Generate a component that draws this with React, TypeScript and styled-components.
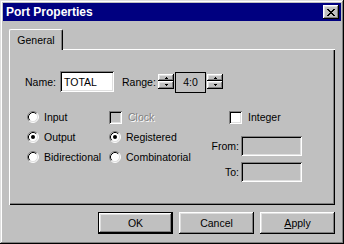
import React from "react";
import styled, { createGlobalStyle } from "styled-components";

const GlobalStyle = createGlobalStyle`
  html, body {
    margin: 0;
    padding: 0;
    background: #c0c0c0;
  }
  body {
    font-family: "Liberation Sans", Arial, sans-serif;
    font-size: 10.5px;
    color: #000;
  }
  * {
    box-sizing: border-box;
  }
`;

const raised = `box-shadow: inset -1px -1px #000, inset 1px 1px #fff, inset -2px -2px #808080, inset 2px 2px #dfdfdf;`;
const sunken = `box-shadow: inset 1px 1px #808080, inset -1px -1px #fff, inset 2px 2px #000, inset -2px -2px #dfdfdf;`;

const Window = styled.div`
  width: 344px;
  height: 244px;
  padding: 3px;
  background: #c0c0c0;
  box-shadow: inset -1px -1px #000, inset 1px 1px #dfdfdf,
    inset -2px -2px #808080, inset 2px 2px #fff;
  display: flex;
  flex-direction: column;
`;

const TitleBar = styled.div`
  height: 18px;
  flex-shrink: 0;
  background: #000080;
  display: flex;
  align-items: center;
  justify-content: space-between;
  padding: 0 2px 0 3px;
`;

const Title = styled.span`
  color: #fff;
  font-weight: bold;
  font-size: 12px;
`;

const CloseButton = styled.div`
  width: 16px;
  height: 14px;
  background: #c0c0c0;
  ${raised}
  display: flex;
  align-items: center;
  justify-content: center;
`;

const Body = styled.div`
  flex: 1;
  display: flex;
  flex-direction: column;
  padding: 8px 6px 0 6px;
`;

const TabStrip = styled.div`
  height: 20px;
  display: flex;
  align-items: flex-start;
`;

const Tab = styled.div`
  position: relative;
  z-index: 1;
  width: 54px;
  height: 21px;
  background: #c0c0c0;
  border-left: 1px solid #fff;
  border-top: 1px solid #fff;
  border-right: 1px solid #000;
  border-radius: 2px 2px 0 0;
  box-shadow: inset -1px 0 #808080;
  display: flex;
  align-items: center;
  justify-content: center;
  padding-bottom: 1px;
`;

const Panel = styled.div`
  height: 156px;
  flex-shrink: 0;
  box-shadow: inset 1px 1px #fff, inset -1px -1px #000, inset -2px -2px #808080;
  padding: 22px 0 0 16px;
  display: flex;
  flex-direction: column;
`;

const NameRow = styled.div`
  height: 21px;
  display: flex;
  align-items: center;
`;

const FieldLabel = styled.span<{ $width: number; $gap?: number }>`
  width: ${(p) => p.$width}px;
  margin-left: ${(p) => p.$gap ?? 0}px;
  white-space: nowrap;
`;

const TextBox = styled.div<{ $width: number; $disabled?: boolean }>`
  width: ${(p) => p.$width}px;
  height: ${(p) => (p.$disabled ? 20 : 21)}px;
  background: ${(p) => (p.$disabled ? "#c0c0c0" : "#fff")};
  ${sunken}
  display: flex;
  align-items: center;
  padding-left: 4px;
`;

const ValueBox = styled.div`
  width: 31px;
  height: 21px;
  margin: 1px 1px 0 1px;
  border: 1px solid #000;
  display: flex;
  align-items: center;
  justify-content: center;
`;

const SpinBox = styled.div`
  width: 16px;
  height: 15px;
  display: flex;
  flex-direction: column;
`;

const SpinButton = styled.div<{ $h: number }>`
  height: ${(p) => p.$h}px;
  background: #c0c0c0;
  ${raised}
  display: flex;
  align-items: center;
  justify-content: center;
`;

const Options = styled.div`
  display: flex;
  margin: 15px 0 0 2px;
`;

const Column = styled.div<{ $width: number }>`
  width: ${(p) => p.$width}px;
  display: flex;
  flex-direction: column;
`;

const OptionRow = styled.div<{ $indent?: number }>`
  height: 20px;
  display: flex;
  align-items: center;
  padding-left: ${(p) => p.$indent ?? 0}px;
`;

const OptionText = styled.span<{ $gap: number; $disabled?: boolean }>`
  margin-left: ${(p) => p.$gap}px;
  white-space: nowrap;
  color: ${(p) => (p.$disabled ? "#808080" : "#000")};
  text-shadow: ${(p) => (p.$disabled ? "1px 1px #fff" : "none")};
`;

const CheckBox = styled.span<{ $disabled?: boolean }>`
  width: 13px;
  height: 13px;
  flex-shrink: 0;
  background: ${(p) => (p.$disabled ? "#c0c0c0" : "#fff")};
  ${sunken}
`;

const RangeRow = styled.div<{ $top: number }>`
  height: 20px;
  margin-top: ${(p) => p.$top}px;
  display: flex;
  align-items: center;
`;

const RangeLabel = styled.span`
  width: 33px;
  margin-right: 2px;
  text-align: right;
`;

const ButtonRow = styled.div`
  margin-top: 7px;
  display: flex;
  justify-content: flex-end;
  gap: 6px;
`;

const Button = styled.div<{ $default?: boolean }>`
  width: 75px;
  height: 22px;
  background: #c0c0c0;
  border: ${(p) => (p.$default ? "1px solid #000" : "none")};
  ${raised}
  display: flex;
  align-items: center;
  justify-content: center;
`;

const CloseGlyph = () => (
  <svg width="8" height="7" viewBox="0 0 8 7" shapeRendering="crispEdges">
    <path
      fill="#000"
      d="M0 0h2v1H0zM6 0h2v1H6zM1 1h2v1H1zM5 1h2v1H5zM2 2h4v1H2zM3 3h2v1H3zM2 4h4v1H2zM1 5h2v1H1zM5 5h2v1H5zM0 6h2v1H0zM6 6h2v1H6z"
    />
  </svg>
);

const Arrow = ({ down }: { down?: boolean }) => (
  <svg width="3" height="2" viewBox="0 0 3 2" shapeRendering="crispEdges">
    <path fill="#000" d={down ? "M0 0h3v1H0zM1 1h1v1H1z" : "M1 0h1v1H1zM0 1h3v1H0z"} />
  </svg>
);

const Spinner = () => (
  <SpinBox>
    <SpinButton $h={7}>
      <Arrow />
    </SpinButton>
    <SpinButton $h={8}>
      <Arrow down />
    </SpinButton>
  </SpinBox>
);

const RadioMark = ({ checked }: { checked?: boolean }) => (
  <svg width="12" height="12" viewBox="0 0 12 12" style={{ flexShrink: 0 }}>
    <circle cx="6" cy="6" r="5" fill="#fff" />
    <path d="M2.11 9.89A5.5 5.5 0 0 1 9.89 2.11" stroke="#808080" fill="none" />
    <path d="M9.89 2.11A5.5 5.5 0 0 1 2.11 9.89" stroke="#fff" fill="none" />
    <path d="M2.82 9.18A4.5 4.5 0 0 1 9.18 2.82" stroke="#000" fill="none" />
    <path d="M9.18 2.82A4.5 4.5 0 0 1 2.82 9.18" stroke="#dfdfdf" fill="none" />
    {checked && <circle cx="6" cy="6" r="2" fill="#000" />}
  </svg>
);

const Radio = ({ label, checked }: { label: string; checked?: boolean }) => (
  <OptionRow>
    <RadioMark checked={checked} />
    <OptionText $gap={5}>{label}</OptionText>
  </OptionRow>
);

const Check = ({ label, disabled, indent }: { label: string; disabled?: boolean; indent?: number }) => (
  <OptionRow $indent={indent}>
    <CheckBox $disabled={disabled} />
    <OptionText $gap={6} $disabled={disabled}>
      {label}
    </OptionText>
  </OptionRow>
);

export default function App() {
  return (
    <>
      <GlobalStyle />
      <Window>
        <TitleBar>
          <Title>Port Properties</Title>
          <CloseButton>
            <CloseGlyph />
          </CloseButton>
        </TitleBar>
        <Body>
          <TabStrip>
            <Tab>General</Tab>
          </TabStrip>
          <Panel>
            <NameRow>
              <FieldLabel $width={35}>Name:</FieldLabel>
              <TextBox $width={54}>TOTAL</TextBox>
              <FieldLabel $width={36} $gap={8}>
                Range:
              </FieldLabel>
              <Spinner />
              <ValueBox>4:0</ValueBox>
              <Spinner />
            </NameRow>
            <Options>
              <Column $width={82}>
                <Radio label="Input" />
                <Radio label="Output" checked />
                <Radio label="Bidirectional" />
              </Column>
              <Column $width={97}>
                <Check label="Clock" disabled />
                <Radio label="Registered" checked />
                <Radio label="Combinatorial" />
              </Column>
              <Column $width={100}>
                <Check label="Integer" indent={23} />
                <RangeRow $top={9}>
                  <RangeLabel>From:</RangeLabel>
                  <TextBox $width={61} $disabled />
                </RangeRow>
                <RangeRow $top={6}>
                  <RangeLabel>To:</RangeLabel>
                  <TextBox $width={61} $disabled />
                </RangeRow>
              </Column>
            </Options>
          </Panel>
          <ButtonRow>
            <Button $default>OK</Button>
            <Button>Cancel</Button>
            <Button>
              <span>
                <u>A</u>pply
              </span>
            </Button>
          </ButtonRow>
        </Body>
      </Window>
    </>
  );
}
